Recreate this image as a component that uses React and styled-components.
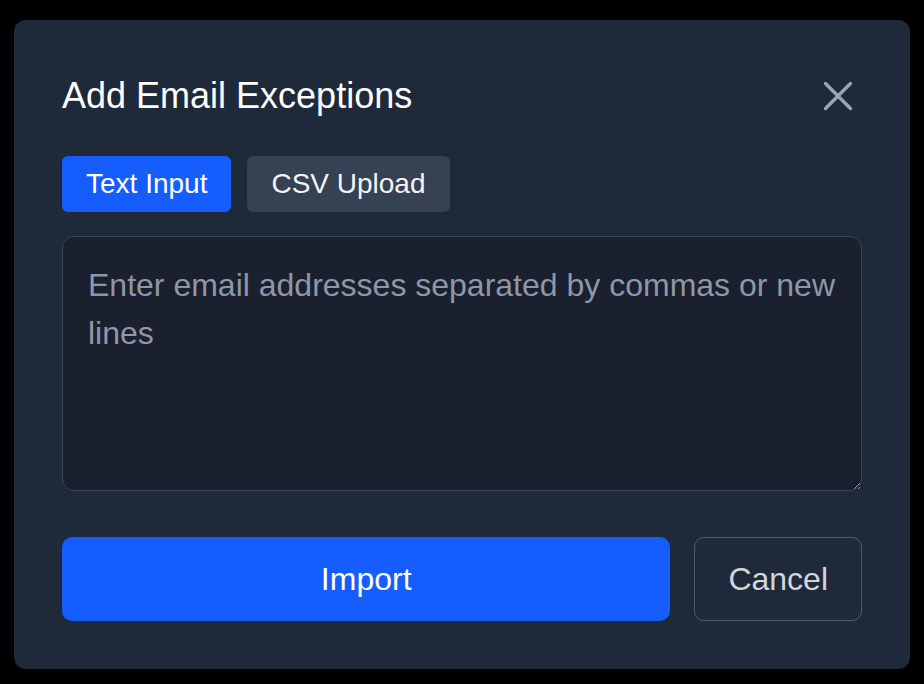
import React, { useState } from "react";
import styled, { createGlobalStyle } from "styled-components";

const Global = createGlobalStyle`
  html, body { margin: 0; padding: 0; background: #000; }
  body { font-family: "Liberation Sans", Arial, sans-serif; }
  * { box-sizing: border-box; }
`;

const Page = styled.div`
  width: 924px;
  height: 684px;
  display: flex;
  justify-content: center;
  align-items: flex-start;
  padding-top: 20px;
  background: #000;
`;

const Dialog = styled.div`
  width: 896px;
  background: #1e2939;
  border-radius: 12px;
  padding: 48px;
  display: flex;
  flex-direction: column;
  box-shadow: 0 20px 40px rgba(0, 0, 0, 0.5);
`;

const Header = styled.div`
  height: 56px;
  display: flex;
  align-items: center;
  justify-content: space-between;
  margin-bottom: 32px;
`;

const Title = styled.h2`
  margin: 0;
  font-size: 36px;
  font-weight: 400;
  color: #ffffff;
  line-height: 56px;
`;

const CloseButton = styled.button`
  width: 48px;
  height: 48px;
  background: transparent;
  border: none;
  padding: 0;
  display: flex;
  align-items: center;
  justify-content: center;
  color: #9ca4b2;
  cursor: pointer;
`;

const Tabs = styled.div`
  display: flex;
  gap: 16px;
  margin-bottom: 24px;
`;

const Tab = styled.button`
  height: 56px;
  padding: 0 24px;
  border: none;
  border-radius: 6px;
  font-family: inherit;
  font-size: 28px;
  color: ${(p) => (p.$active ? "#ffffff" : "#f3f4f6")};
  background: ${(p) => (p.$active ? "#155dfc" : "#364153")};
  cursor: pointer;
`;

const TextArea = styled.textarea`
  display: block;
  width: 100%;
  height: 255px;
  margin: 0 0 46px;
  padding: 24px 24px 24px 25px;
  border: 1px solid #3a4558;
  border-radius: 12px;
  background: #1a202d;
  color: #f3f4f6;
  font-family: inherit;
  font-size: 32px;
  line-height: 48px;
  outline: none;
  resize: vertical;
  &::placeholder {
    color: #8e97a8;
  }
`;

const Actions = styled.div`
  display: flex;
  gap: 24px;
`;

const Button = styled.button`
  height: 84px;
  border-radius: 10px;
  font-family: inherit;
  font-size: 32px;
  cursor: pointer;
  ${(p) =>
    p.$primary
      ? `
    flex: 1;
    background: #155dfc;
    color: #ffffff;
    border: none;
  `
      : `
    padding: 0 33px;
    background: transparent;
    color: #d1d5dc;
    border: 1.5px solid #4f5a6b;
  `}
`;

export default function App() {
  const [tab, setTab] = useState("text");
  return (
    <>
      <Global />
      <Page>
        <Dialog>
          <Header>
            <Title>Add Email Exceptions</Title>
            <CloseButton aria-label="Close">
              <svg width="30" height="30" viewBox="0 0 30 30" fill="none">
                <path
                  d="M2.5 2.5L27.5 27.5M27.5 2.5L2.5 27.5"
                  stroke="currentColor"
                  strokeWidth="3.4"
                  strokeLinecap="round"
                />
              </svg>
            </CloseButton>
          </Header>
          <Tabs>
            <Tab $active={tab === "text"} onClick={() => setTab("text")}>
              Text Input
            </Tab>
            <Tab $active={tab === "csv"} onClick={() => setTab("csv")}>
              CSV Upload
            </Tab>
          </Tabs>
          <TextArea placeholder="Enter email addresses separated by commas or new lines" />
          <Actions>
            <Button $primary>Import</Button>
            <Button>Cancel</Button>
          </Actions>
        </Dialog>
      </Page>
    </>
  );
}
